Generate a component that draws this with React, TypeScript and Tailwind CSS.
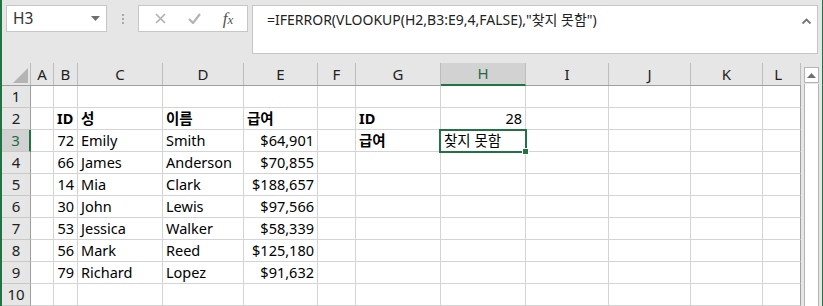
import React from 'react';

const font = { fontFamily: '"Noto Sans", "Noto Sans CJK KR", sans-serif' };

const cols = [
  { key: 'A', w: 'w-[23px]' },
  { key: 'B', w: 'w-[24px]' },
  { key: 'C', w: 'w-[85px]' },
  { key: 'D', w: 'w-[81px]' },
  { key: 'E', w: 'w-[74px]' },
  { key: 'F', w: 'w-[38px]' },
  { key: 'G', w: 'w-[85px]' },
  { key: 'H', w: 'w-[85px]' },
  { key: 'I', w: 'w-[83px]' },
  { key: 'J', w: 'w-[82px]' },
  { key: 'K', w: 'w-[72px]' },
  { key: 'L', w: 'w-[38px]' },
];

type Cell = { v: string; right?: boolean; bold?: boolean };

const people = [
  ['72', 'Emily', 'Smith', '$64,901'],
  ['66', 'James', 'Anderson', '$70,855'],
  ['14', 'Mia', 'Clark', '$188,657'],
  ['30', 'John', 'Lewis', '$97,566'],
  ['53', 'Jessica', 'Walker', '$58,339'],
  ['56', 'Mark', 'Reed', '$125,180'],
  ['79', 'Richard', 'Lopez', '$91,632'],
];

function buildRows(): Record<string, Cell>[] {
  const rows: Record<string, Cell>[] = [];
  rows.push({});
  rows.push({
    B: { v: 'ID', bold: true },
    C: { v: '성', bold: true },
    D: { v: '이름', bold: true },
    E: { v: '급여', bold: true },
    G: { v: 'ID', bold: true },
    H: { v: '28', right: true },
  });
  people.forEach((p, i) => {
    const r: Record<string, Cell> = {
      B: { v: p[0], right: true },
      C: { v: p[1] },
      D: { v: p[2] },
      E: { v: p[3], right: true },
    };
    if (i === 0) {
      r.G = { v: '급여', bold: true };
      r.H = { v: '찾지 못함' };
    }
    rows.push(r);
  });
  rows.push({});
  return rows;
}

function Toolbar() {
  return (
    <div className="flex items-start h-[63px] pt-[5px] pl-[4px]">
      <div className="w-[101px] h-[27px] bg-white border border-[#c6c6c6] flex items-center justify-between pl-[6px] pr-[6px]">
        <span className="text-[15.5px] text-[#333]">H3</span>
        <svg width="9" height="5" viewBox="0 0 9 5">
          <path d="M0 0 H9 L4.5 5 Z" fill="#6e6e6e" />
        </svg>
      </div>
      <div className="w-[31px] h-[27px] flex flex-col items-center justify-center gap-[2px]">
        <span className="w-[2px] h-[2px] bg-[#a8a8a8]" />
        <span className="w-[2px] h-[2px] bg-[#a8a8a8]" />
        <span className="w-[2px] h-[2px] bg-[#a8a8a8]" />
      </div>
      <div className="w-[110px] h-[27px] bg-white border border-[#c6c6c6] flex items-center">
        <div className="w-[40px] flex justify-center pl-[2px]">
          <svg width="11" height="11" viewBox="0 0 11 11">
            <path d="M1 1 L10 10 M10 1 L1 10" stroke="#b0b0b0" strokeWidth="1.6" />
          </svg>
        </div>
        <div className="w-[30px] flex justify-center">
          <svg width="13" height="11" viewBox="0 0 13 11">
            <path d="M1 6 L5 10 L12 1" stroke="#b4b4b4" strokeWidth="2.2" fill="none" />
          </svg>
        </div>
        <div className="flex-1 flex justify-center">
          <span
            className="text-[17px] italic text-[#555] leading-none"
            style={{ fontFamily: '"Liberation Serif", serif' }}
          >
            f<span className="text-[13px]">x</span>
          </span>
        </div>
      </div>
      <div className="ml-[4px] w-[566px] h-[49px] bg-white border border-[#c6c6c6] flex justify-between pl-[14px] pr-[6px] pt-[4px]">
        <span className="text-[14px] text-[#222] leading-[20px]">
          =IFERROR(VLOOKUP(H2,B3:E9,4,FALSE),"찾지 못함")
        </span>
        <svg width="9" height="6" viewBox="0 0 9 6" className="mt-[8px]">
          <path d="M0.5 5.5 L4.5 1.5 L8.5 5.5" stroke="#707070" strokeWidth="1.8" fill="none" />
        </svg>
      </div>
    </div>
  );
}

function Grid() {
  const rows = buildRows();
  return (
    <div className="relative">
      <div className="flex h-[23px] bg-[#e6e6e6] border-b border-[#9e9e9e]">
        <div className="w-[29px] border-r border-[#bdbdbd] relative">
          <svg width="15" height="15" viewBox="0 0 15 15" className="absolute right-[2px] bottom-[2px]">
            <path d="M15 0 L15 15 L0 15 Z" fill="#b4b4b4" />
          </svg>
        </div>
        {cols.map((c) => {
          const sel = c.key === 'H';
          return (
            <div
              key={c.key}
              className={`${c.w} shrink-0 border-r border-[#bdbdbd] flex items-center text-[15px] ${
                c.key === 'L' ? 'justify-end pr-[18px]' : 'justify-center'
              } ${sel ? 'bg-[#d2d2d2] text-[#1e6b42] border-b-2 border-b-[#217346] -mb-px' : 'text-[#222]'}`}
            >
              {c.key}
            </div>
          );
        })}
      </div>
      {rows.map((r, i) => {
        const n = i + 1;
        const selRow = n === 3;
        return (
          <div key={n} className="flex h-[22px]">
            <div
              className={`w-[29px] shrink-0 border-b border-[#c8c8c8] flex items-center justify-center text-[15px] ${
                selRow
                  ? 'bg-[#d2d2d2] text-[#1e6b42] border-r-2 border-r-[#217346]'
                  : 'bg-[#e6e6e6] text-[#222] border-r border-r-[#9e9e9e]'
              }`}
            >
              {n}
            </div>
            {cols.map((c) => {
              const cell = r[c.key];
              return (
                <div
                  key={c.key}
                  className={`${c.w} shrink-0 bg-white border-r border-b border-[#d4d4d4] px-[3px] text-[14.5px] leading-[21px] whitespace-nowrap overflow-hidden text-[#000] ${
                    cell?.right ? 'text-right' : 'text-left'
                  } ${cell?.bold ? 'font-bold' : ''} ${c.key === 'L' ? 'border-r-[#a0a0a0]' : ''}`}
                >
                  {cell?.v ?? ''}
                </div>
              );
            })}
          </div>
        );
      })}
      <div className="absolute left-[437px] top-[66px] w-[88px] h-[24px] border-2 border-[#217346]">
        <div className="absolute -right-[4px] -bottom-[4px] w-[7px] h-[7px] bg-[#217346] border border-white" />
      </div>
    </div>
  );
}

function Scrollbar() {
  return (
    <div className="ml-[3px] mt-[4px] w-[15px] flex flex-col">
      <div className="h-[16px] bg-white border border-[#b4b4b4] flex items-center justify-center">
        <svg width="9" height="5" viewBox="0 0 9 5">
          <path d="M0 5 L4.5 0 L9 5 Z" fill="#707070" />
        </svg>
      </div>
      <div className="flex-1 bg-white border-x border-[#b4b4b4] mt-[1px]" />
    </div>
  );
}

export default function App() {
  return (
    <div
      className="w-[823px] h-[306px] overflow-hidden bg-[#e6e6e6] border-l-2 border-r border-[#217346] text-[#222]"
      style={font}
    >
      <Toolbar />
      <div className="flex">
        <Grid />
        <Scrollbar />
      </div>
    </div>
  );
}
